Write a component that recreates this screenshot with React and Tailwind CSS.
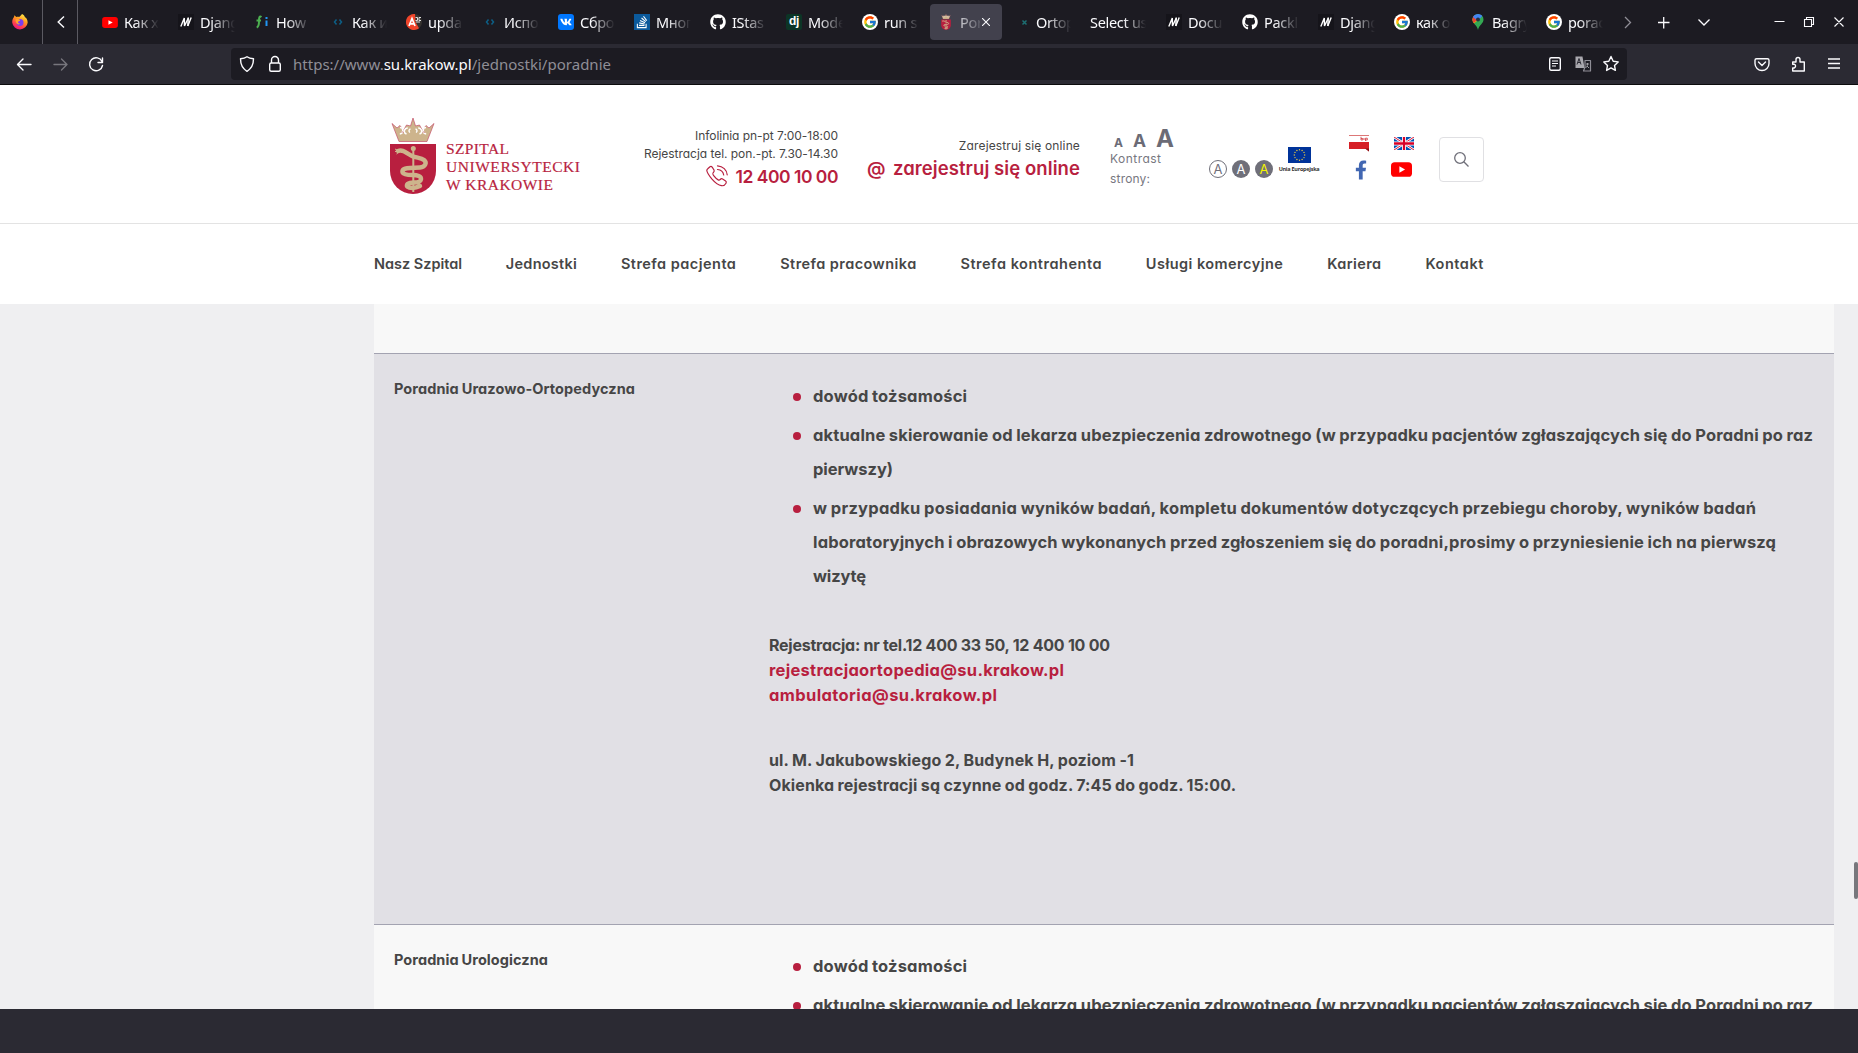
import { useLayoutEffect, useRef } from "react";
import { FaGithub, FaVk, FaStackOverflow, FaFacebookF } from "react-icons/fa";
import { FcGoogle } from "react-icons/fc";

/* Single line of text tracked so that it fills the given width. */
function Line({ w, className = "", children }) {
  const ref = useRef(null);
  useLayoutEffect(() => {
    const el = ref.current;
    el.style.letterSpacing = "0px";
    const natural = el.getBoundingClientRect().width;
    const count = Math.max(1, el.textContent.length - 1);
    el.style.letterSpacing = `${(w - natural) / count}px`;
  }, [w, children]);
  return (
    <span className={`block whitespace-nowrap ${className}`}>
      <span ref={ref} className="inline-block">{children}</span>
    </span>
  );
}

const YouTube = ({ className }) => (
  <svg viewBox="0 0 20 14" className={className}>
    <rect width="20" height="14" rx="3.5" fill="#f00" />
    <path d="M8 4l5.400 3L8 10z" fill="#fff" />
  </svg>
);

const Firefox = () => (
  <svg viewBox="0 0 16 16" className="h-4 w-4">
    <defs>
      <linearGradient id="fx" x1="0.8" y1="0" x2="0.3" y2="1">
        <stop offset="0" stopColor="#fff44f" />
        <stop offset="0.4" stopColor="#ff9a1f" />
        <stop offset="0.75" stopColor="#ff3b4f" />
        <stop offset="1" stopColor="#e31587" />
      </linearGradient>
    </defs>
    <path d="M10 0c2 1 2.6 2.2 3 3.2.9.2 2.7 2.300 2.700 5.200A7.800 7.800 0 0 1 .2 8.600C.1 6 1 4.200 2 3l.4-1.700L4.300 3c1.200-.3 2-.2 3 .1C8 2 9 1.500 10 0z" fill="url(#fx)" />
    <circle cx="8" cy="8.600" r="3.500" fill="#7b3df0" />
    <path d="M3.500 5.500c2-.8 3.500-.5 4.700 1-.6.700-1.900.5-2.200 1.500-.1 1 1 1.800 2 1.500-1 1.800-4.500 1-4.500-4z" fill="#ffa42b" />
  </svg>
);

const Mdn = () => (
  <svg viewBox="0 0 16 16" className="h-4 w-4">
    <rect width="16" height="16" fill="#15141a" />
    <path d="M2.800 12.500L6.300 4 6.500 12l3.800-8M9.800 12l3.400-8.500" fill="none" stroke="#fff" strokeWidth="1.400" />
    <path d="M10.300 3.500L9.800 12" fill="none" stroke="#fff" strokeWidth="1.400" />
  </svg>
);

const Fi = () => (
  <svg viewBox="0 0 16 16" className="h-4 w-4" fill="none" strokeWidth="2">
    <path d="M7.500 3C5.500 1.600 5 3.500 5 6c0 3 .4 6.500-2.300 7.500M2.500 6.500h4.500" stroke="#4caf50" />
    <path d="M12.500 6.500v5.500M12.500 3v2" stroke="#2196f3" />
  </svg>
);

const Code = () => (
  <svg viewBox="0 0 16 16" className="h-4 w-4" fill="none" stroke="#0d5f86" strokeWidth="1.500">
    <path d="M6.500 5.500L4.500 8l2 2.500M9.500 5.500l2 2.500-2 2.500" />
  </svg>
);

const AskUbuntu = () => (
  <svg viewBox="0 0 16 16" className="h-4 w-4">
    <circle cx="8" cy="8" r="8" fill="#35322f" />
    <path d="M8 0a8 8 0 1 0 5 14.200L9.500 8 9 .1z" fill="#f0442a" />
    <path d="M3 12l3-7.500L9 12M4 9.800h4" fill="none" stroke="#fff" strokeWidth="1.700" />
    <path d="M9.500 3.500h2v3h-2M13 3.500h2M13 3.500v3h2M10 8h4" fill="none" stroke="#ddd" />
  </svg>
);

const Vk = () => (
  <span className="flex h-4 w-4 items-center justify-center rounded-[3px] bg-[#07f] text-white">
    <FaVk size={12} />
  </span>
);

const Stack = () => (
  <span className="flex h-4 w-4 items-center justify-center bg-[#0b5a9c] text-white">
    <FaStackOverflow size={14} />
  </span>
);

const Django = () => (
  <span className="flex h-4 w-4 justify-center rounded-[2px] bg-[#0c3526] font-['Liberation_Sans'] text-[12px] leading-[15px] font-bold tracking-[-0.3px] text-white">
    dj
  </span>
);

const Google = () => (
  <span className="flex h-4 w-4 items-center justify-center rounded-full bg-white">
    <FcGoogle size={14} />
  </span>
);

const Crest = ({ className }) => (
  <svg viewBox="0 0 46 76" className={className}>
    <path d="M9 23.500L2 5.500l5 4.500 3-2.500 3.500 5 3-5.500 4 1L23 0l2.500 8 4-1 3 5.500 3.500-5L39 10l5-4.500-7 18z" fill="#cdb48c" stroke="#c4506a" strokeWidth="0.700" />
    <path d="M10 9.500c3.500 0 4 6-.2 6.500M16.500 16c-4-1.500-2-6 1.300-6M29.500 16c4-1.500 2-6-1.300-6M36 9.500c-3.500 0-4 6 .2 6.500M20 14.500c-1.500-1-1.300-3 .5-3.500M26 14.500c1.500-1 1.300-3-.5-3.500" stroke="#fff" strokeWidth="1.400" fill="none" />
    <path d="M12 14.500c.3-1 1.200-1 1.500 0M33 14.500c.3-1 1.200-1 1.500 0" stroke="#c4506a" strokeWidth="0.800" fill="none" />
    <path d="M0 26h46v27a23 23 0 0 1-46 0z" fill="#b81f3f" />
    <path d="M23.300 30v44" stroke="#cdb48c" strokeWidth="2" />
    <circle cx="23.300" cy="30.500" r="2.500" fill="#cdb48c" />
    <path d="M8 33c5-2 8 2 14 5 4 2 9 1.500 12 4 3.500 3 1 7-4 7.500-6 .5-16-.5-17.500 3-1 4 5 4.500 10 4.500 5 0 9 1 8.500 4.500C30.500 65 25 64 20 65c-4 1-4 3.500-1 4.500 4 1 8 0 11-1.500" fill="none" stroke="#cdb48c" strokeWidth="4.400" strokeLinecap="round" strokeLinejoin="round" />
    <path d="M5 31l5 2.500L6.500 36M5 33.500h4" fill="none" stroke="#cdb48c" strokeWidth="1" />
  </svg>
);

const Ortopedia = () => (
  <svg viewBox="0 0 16 16" className="h-4 w-4" stroke="#1d6f72" strokeWidth="1.500">
    <path d="M8.500 6.500l4 4M12.500 6.500l-4 4" />
  </svg>
);

const Maps = () => (
  <svg viewBox="0 0 16 16" className="h-4 w-4">
    <clipPath id="pin"><path d="M8 0a5.500 5.500 0 0 1 5.500 5.500C13.500 9.500 9 11 8 16 7 11 2.500 9.500 2.500 5.500A5.500 5.500 0 0 1 8 0z" /></clipPath>
    <g clipPath="url(#pin)">
      <rect width="16" height="16" fill="#34a853" />
      <path d="M0 13V6l4-3 4 3z" fill="#fbbc04" />
      <path d="M0 1h4l4 4-4 4-4-1z" fill="#ea4335" />
      <path d="M3 0h11l-6 7-5-4z" fill="#4285f4" />
    </g>
    <circle cx="8" cy="5.500" r="2" fill="#26303e" />
  </svg>
);

const TABS = [
  { icon: <YouTube className="h-[11px] w-4" />, text: "Как х" },
  { icon: <Mdn />, text: "Djang" },
  { icon: <Fi />, text: "How" },
  { icon: <Code />, text: "Как и" },
  { icon: <AskUbuntu />, text: "upda" },
  { icon: <Code />, text: "Испо" },
  { icon: <Vk />, text: "Сбро" },
  { icon: <Stack />, text: "Мног" },
  { icon: <FaGithub className="h-4 w-4 text-white" />, text: "IStas" },
  { icon: <Django />, text: "Mode" },
  { icon: <Google />, text: "run s" },
  { icon: <Crest className="h-4 w-4" />, text: "Por", active: true },
  { icon: <Ortopedia />, text: "Ortop" },
  { text: "Select us" },
  { icon: <Mdn />, text: "Docu" },
  { icon: <FaGithub className="h-4 w-4 text-white" />, text: "Packl" },
  { icon: <Mdn />, text: "Djang" },
  { icon: <Google />, text: "как о" },
  { icon: <Maps />, text: "Bagry" },
  { icon: <Google />, text: "porac" },
];

function Tab({ icon, text, active }) {
  return (
    <div className={`mx-[2px] flex h-9 w-[72px] shrink-0 items-center pl-2 ${active ? "rounded bg-[#42414d]" : ""}`}>
      {icon && <span className="mr-[6px] flex w-4 shrink-0 items-center justify-center">{icon}</span>}
      <span
        className={`overflow-hidden pt-px text-[14.5px] tracking-[-0.3px] whitespace-nowrap text-[#fbfbfe] ${
          active
            ? "w-5 [mask-image:linear-gradient(to_right,rgba(0,0,0,.75),rgba(0,0,0,.15))]"
            : icon
              ? "w-[35px] [mask-image:linear-gradient(to_right,black_30%,transparent)]"
              : "w-14 [mask-image:linear-gradient(to_right,black_60%,transparent)]"
        }`}
      >
        {text}
      </span>
      {active && (
        <svg viewBox="0 0 8 8" className="ml-[2px] h-2 w-2 shrink-0" stroke="#fbfbfe" strokeWidth="1.100">
          <path d="M0 0l8 8M8 0L0 8" />
        </svg>
      )}
    </div>
  );
}

function TabStrip() {
  return (
    <div className="flex h-11 bg-[#1c1b22]">
      <div className="flex w-[43px] shrink-0 items-center border-r border-[#5b5a62] pl-3">
        <Firefox />
      </div>
      <div className="flex w-[35px] shrink-0 items-center justify-center border-r border-[#5b5a62] pl-[2px]">
        <svg viewBox="0 0 8 12" className="h-3 w-2" fill="none" stroke="#fbfbfe" strokeWidth="1.400"><path d="M7 .5L1.200 6 7 11.500" /></svg>
      </div>
      <div className="ml-[14px] flex w-[1520px] shrink-0 pt-1">
        {TABS.map((t, i) => <Tab key={i} {...t} />)}
      </div>
      <svg viewBox="0 0 246 44" className="h-11 w-[246px] shrink-0" fill="none" stroke="#fbfbfe" strokeWidth="1.300">
        <path d="M13 17l5.500 5.500L13 28" stroke="#8f8e96" />
        <path d="M46 22.500h11.500M51.700 17v11.500M86.500 19.500l5.500 5.500 5.500-5.500" />
        <path d="M162.500 21.500h10M192.500 19.500h7v7h-7zM194.500 19.500v-2h7v7h-2M222.500 17.500l9 9M231.500 17.500l-9 9" strokeWidth="1.100" />
      </svg>
    </div>
  );
}

function Toolbar() {
  return (
    <div className="flex h-10 items-center bg-[#2b2a33]">
      <svg viewBox="0 0 231 40" className="h-10 w-[231px] shrink-0" fill="none" stroke="#fbfbfe" strokeWidth="1.400" strokeLinecap="round" strokeLinejoin="round">
        <path d="M31 20.500H18M23 15l-5.500 5.500L23 26" />
        <path d="M54 20.500h13M61.500 15l5.500 5.500-5.500 5.500" stroke="#77767d" />
        <path d="M102 17.500a6.500 6.500 0 1 0 .5 4M102.500 14v4.500H98" />
      </svg>
      <div className="flex h-8 w-[1396px] shrink-0 items-center rounded bg-[#1c1b22]">
        <svg viewBox="0 0 62 32" className="h-8 w-[62px] shrink-0" fill="none" stroke="#fbfbfe" strokeWidth="1.400" strokeLinejoin="round">
          <path d="M16 8.700c2 1.500 4 1.900 6.500 2.100 0 5.500-1.500 9.500-6.500 12.500-5-3-6.500-7-6.500-12.500 2.500-.2 4.500-.6 6.500-2.100z" />
          <rect x="38.700" y="15" width="10.600" height="8.300" rx="1.500" />
          <path d="M40.500 15v-3a3.500 3.500 0 0 1 7 0v3" />
        </svg>
        <Line w={318} className="w-[1253px] text-[15px] leading-8 text-[#8f8e96]">
          https://www.<span className="text-[#fbfbfe]">su.krakow.pl</span>/jednostki/poradnie
        </Line>
        <svg viewBox="0 0 76 32" className="h-8 w-[76px] shrink-0" fill="none" stroke="#fbfbfe" strokeWidth="1.400" strokeLinejoin="round">
          <rect x="3.700" y="9.700" width="10.600" height="12.600" rx="1.500" />
          <path d="M6 13h6M6 15.500h6M6 18h4" strokeWidth="1.100" />
          <path d="M29.500 8.500h7l2 11.500h-9z" fill="#a9a8ae" stroke="none" />
          <path d="M31 16.500l2-6 2 6M32 14.500h2.500" stroke="#2b2a33" strokeWidth="1" />
          <path d="M39 12.500h5.500v10.500h-7l1.500-4z" stroke="#8f8e96" strokeWidth="1.200" />
          <path d="M40 16h3M41.500 15v1c0 2-1 3-2 4M41 18l2 2" stroke="#a9a8ae" strokeWidth="0.900" />
          <path d="M65 8.500l2.200 4.700 5 .7-3.700 3.500.9 5-4.400-2.500-4.400 2.500.9-5-3.700-3.500 5-.7z" />
        </svg>
      </div>
      <svg viewBox="0 0 231 40" className="h-10 w-[231px] shrink-0" fill="none" stroke="#fbfbfe" strokeWidth="1.400" strokeLinejoin="round">
        <path d="M129.500 14.700h11a1.500 1.500 0 0 1 1.500 1.500v3.300a6.800 6.800 0 0 1-14 0v-3.300a1.500 1.500 0 0 1 1.500-1.500zM131.500 18l3.500 3.500 3.500-3.500" strokeLinecap="round" />
        <path d="M165.700 18h3.300v-2.500a2 2 0 0 1 4 0v2.500h4.300v9h-11.600v-3h1.500a2 2 0 0 0 0-3.800h-1.500z" />
        <path d="M201 15h12M201 19.500h12M201 24h12" strokeWidth="1.300" />
      </svg>
    </div>
  );
}

const stars = Array.from({ length: 12 }, (_, i) => {
  const a = (i * Math.PI) / 6;
  return { x: 11.5 + 5.2 * Math.sin(a), y: 8 - 5.2 * Math.cos(a) };
});

const EuFlag = () => (
  <svg viewBox="0 0 23 16" className="h-4 w-[23px]">
    <rect width="23" height="16" fill="#003399" />
    {stars.map((s, i) => <circle key={i} cx={s.x} cy={s.y} r="0.700" fill="#e8c840" />)}
  </svg>
);

const UkFlag = () => (
  <svg viewBox="0 0 20 13" className="h-[13px] w-5">
    <rect width="20" height="13" fill="#0052b4" />
    <path d="M0 0l20 13M20 0L0 13" stroke="#fff" strokeWidth="2.600" />
    <path d="M0 0l20 13M20 0L0 13" stroke="#d80027" strokeWidth="0.900" />
    <path d="M10 0v13M0 6.500h20" stroke="#fff" strokeWidth="4" />
    <path d="M10 0v13M0 6.500h20" stroke="#d80027" strokeWidth="2.300" />
  </svg>
);

const BipFlag = () => (
  <svg viewBox="0 0 20 17" className="h-[17px] w-5">
    <rect width="20" height="1" fill="#d77" />
    <path d="M0 7h20v9.500L17 14H0z" fill="#d61f26" />
    <path d="M16 13.500h4v3z" fill="#8c1015" />
    <path d="M12 1.800v3.200h1.800V3.500H12M15 3v2M16.500 6V3.200h1.800V5h-1.800" stroke="#d0343a" strokeWidth="0.800" fill="none" />
  </svg>
);

const CONTRAST = [
  "border border-[#6f6f79] bg-white text-[#6f6f79]",
  "bg-[#6f6f79] text-white",
  "bg-[#6f6f79] text-[#f4f400]",
];

function Header() {
  return (
    <header className="h-[139px] border-b border-[#e3e3e3] bg-white pl-[374px]">
      <div className="flex h-full w-[1110px] items-start">
        <div className="flex w-[230px] pt-[33px] pl-4">
          <Crest className="h-[76px] w-[46px] shrink-0" />
          <div className="mt-[22px] ml-[10px] font-['Liberation_Serif',serif] text-[15.5px] leading-[18px] text-[#b81f3f] [-webkit-text-stroke:0.2px]">
            <Line w={63}>SZPITAL</Line>
            <Line w={134}>UNIWERSYTECKI</Line>
            <Line w={107}>W KRAKOWIE</Line>
          </div>
        </div>
        <div className="flex w-[234px] flex-col items-end pt-[42px] text-[12px] leading-[18px] text-[#464646]">
          <Line w={143}>Infolinia pn-pt 7:00-18:00</Line>
          <Line w={194}>Rejestracja tel. pon.-pt. 7.30-14.30</Line>
          <div className="flex items-center">
            <svg viewBox="0 0 22 22" className="mr-[7px] h-[22px] w-[22px]" fill="none" stroke="#b81f3f" strokeWidth="1.200" strokeLinecap="round">
              <path d="M2 3.500l2-1.800c.8-.6 1.600-.3 2.200.4L8 5c.5 1 .2 1.500-.4 2.200-1.400 1.200-1.100 1.800.3 3.700 1.500 2 3 3.300 4.300 4 1 .6 1.300.3 2-.4.800-.9 1.500-1 2.400-.5l3 2c.9.6.9 1.300.4 2.200-1 1.800-2.500 2.800-4.500 2.500-3-.4-6.500-3-9.500-6.500C3 10.500 1 7.500.8 5.500c0-.8.5-1.400 1.200-2z" />
              <path d="M11.500.8c5.500.5 9.300 4.200 9.700 9M11.500 4.500c3.500.3 5.700 2.300 6.200 5.500" />
            </svg>
            <Line w={103} className="mt-[2px] text-[17.5px] leading-6 font-semibold text-[#b81f3f]">12 400 10 00</Line>
          </div>
        </div>
        <div className="flex w-[242px] flex-col items-end pt-[51px] text-[12px] leading-[20px] text-[#464646]">
          <Line w={121}>Zarejestruj się online</Line>
          <div className="flex text-[18.5px] leading-6 font-semibold text-[#b81f3f]">
            <Line w={18} className="mr-2">@</Line>
            <Line w={187}>zarejestruj się online</Line>
          </div>
        </div>
        <div className="ml-[30px] w-[99px] pt-[42px] text-[12px] leading-5 text-[#77777f]">
          <div className="flex h-6 items-baseline gap-[10px] pl-1 leading-6 font-bold text-[#6b6b76]">
            <span className="text-[12px]">A</span>
            <span className="text-[17.5px]">A</span>
            <span className="text-[24px]">A</span>
          </div>
          <Line w={51} className="-mt-[2px]">Kontrast</Line>
          <Line w={40}>strony:</Line>
        </div>
        <div className="flex gap-[5px] pt-[75px]">
          {CONTRAST.map((c) => (
            <span key={c} className={`flex h-[18px] w-[18px] items-center justify-center rounded-full text-[13px] leading-none ${c}`}>A</span>
          ))}
        </div>
        <div className="ml-[5px] flex w-[42px] flex-col items-center pt-[62px]">
          <EuFlag />
          <Line w={41} className="mt-[3px] font-['Open_Sans'] text-[5.5px] leading-[6px] font-bold text-[#333]">Unia Europejska</Line>
        </div>
        <div className="ml-[29px] flex w-[66px] justify-between pt-[50px]">
          <div className="flex w-5 flex-col items-center">
            <BipFlag />
            <FaFacebookF className="mt-2 ml-[3px] h-5 w-[12px] text-[#4267b2]" />
          </div>
          <div className="flex w-[22px] flex-col items-center pt-[2px]">
            <UkFlag />
            <YouTube className="mt-3 -ml-[6px] h-[15px] w-[21px]" />
          </div>
        </div>
        <div className="mt-[52px] ml-6 flex h-[45px] w-[45px] shrink-0 items-center justify-center rounded border border-[#e0e0e3]">
          <svg viewBox="0 0 15 15" className="-mt-[1px] h-[15px] w-[15px]" fill="none" stroke="#6f6f79" strokeWidth="1.300">
            <circle cx="6" cy="6" r="5.300" /><path d="M9.800 9.800l4.700 4.700" />
          </svg>
        </div>
      </div>
    </header>
  );
}

const NAV = [
  ["Nasz Szpital", 88],
  ["Jednostki", 71],
  ["Strefa pacjenta", 115],
  ["Strefa pracownika", 136],
  ["Strefa kontrahenta", 141],
  ["Usługi komercyjne", 137],
  ["Kariera", 54],
  ["Kontakt", 58],
];

function Nav() {
  return (
    <nav className="flex h-20 bg-white pl-[374px]">
      <div className="flex w-[1110px] justify-between pt-[28px] text-[14.5px] leading-6 font-semibold">
        {NAV.map(([t, w]) => <Line key={t} w={w}>{t}</Line>)}
      </div>
    </nav>
  );
}

const DOCS = [
  [["dowód tożsamości", 154]],
  [
    ["aktualne skierowanie od lekarza ubezpieczenia zdrowotnego (w przypadku pacjentów zgłaszających się do Poradni po raz", 1000],
    ["pierwszy)", 80],
  ],
  [
    ["w przypadku posiadania wyników badań, kompletu dokumentów dotyczących przebiegu choroby, wyników badań", 943],
    ["laboratoryjnych i obrazowych wykonanych przed zgłoszeniem się do poradni,prosimy o przyniesienie ich na pierwszą", 963],
    ["wizytę", 53],
  ],
];

function DocList({ items }) {
  return (
    <ul className="flex flex-col gap-[5px] pl-[25px] text-[16.5px] leading-[34px]">
      {items.map((lines) => (
        <li key={lines[0][0]} className="flex">
          <span className="mt-[14px] mr-[12px] h-2 w-2 shrink-0 rounded-full bg-[#b81f3f]" />
          <div>{lines.map(([t, w]) => <Line key={t} w={w}>{t}</Line>)}</div>
        </li>
      ))}
    </ul>
  );
}

function Content() {
  return (
    <main className="h-[705px] overflow-hidden bg-[#efeff1] pr-6 pl-[374px] text-[16px] font-bold [word-spacing:-0.6px]">
      <div className="h-[50px] border-b border-[#a3a3b1] bg-[#f8f8f8]" />
      <section className="flex h-[571px] border-b border-[#a3a3b1] bg-[#e1e0e5] pl-5">
        <Line w={241} className="w-[374px] shrink-0 pt-[22px] text-[14.5px] leading-[25px]">Poradnia Urazowo-Ortopedyczna</Line>
        <div className="pt-[25px]">
          <DocList items={DOCS} />
          <div className="mt-10 pl-px leading-[25px] [word-spacing:0px]">
            <Line w={341}>Rejestracja: nr tel.12 400 33 50, 12 400 10 00</Line>
            <Line w={295} className="text-[16.5px] text-[#b81f3f]">rejestracjaortopedia@su.krakow.pl</Line>
            <Line w={228} className="text-[16.5px] text-[#b81f3f]">ambulatoria@su.krakow.pl</Line>
          </div>
          <div className="mt-10 pl-px leading-[25px]">
            <Line w={365}>ul. M. Jakubowskiego 2, Budynek H, poziom -1</Line>
            <Line w={467}>Okienka rejestracji są czynne od godz. 7:45 do godz. 15:00.</Line>
          </div>
        </div>
      </section>
      <section className="flex h-[571px] bg-[#f8f8f8] pl-5">
        <Line w={154} className="w-[374px] shrink-0 pt-[22px] text-[14.5px] leading-[25px]">Poradnia Urologiczna</Line>
        <div className="pt-6">
          <DocList items={DOCS} />
        </div>
      </section>
    </main>
  );
}

export default function App() {
  return (
    <div className="relative h-[1053px] w-[1858px] overflow-hidden bg-[#2b2a33] font-['Noto_Sans',sans-serif]">
      <TabStrip />
      <Toolbar />
      <div className="h-px bg-[#0c0c0d]" />
      <div className="font-['Inter',sans-serif] text-[#464646] [font-feature-settings:'cv11']">
        <Header />
        <Nav />
        <Content />
      </div>
      <div className="absolute top-[862px] right-0 h-[37px] w-1 rounded-full bg-[#77777c]" />
    </div>
  );
}
